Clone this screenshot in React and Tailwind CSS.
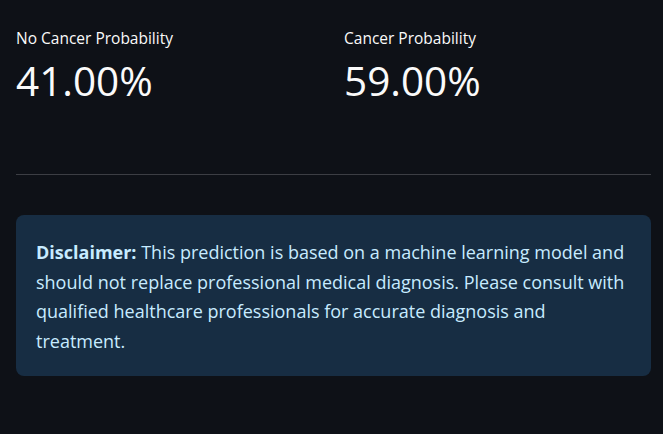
export default function App() {
  return (
    <div
      className="min-h-screen w-full bg-[#0e1117] text-[#fafafa] pl-4 pr-3"
      style={{ fontFamily: "'Open Sans', 'Noto Sans', sans-serif" }}
    >
      <div className="grid grid-cols-2 gap-[21px] pt-[26px]">
        <div>
          <div className="text-[15.5px] leading-[24px]">No Cancer Probability</div>
          <div className="text-[40.5px] leading-[54px] mt-[4px]">41.00%</div>
        </div>
        <div>
          <div className="text-[15.5px] leading-[24px]">Cancer Probability</div>
          <div className="text-[40.5px] leading-[54px] mt-[4px]">59.00%</div>
        </div>
      </div>

      <hr className="mt-[66px] border-0 border-t border-[#3c3e44]" />

      <div className="mt-10 rounded-lg bg-[#172d43] px-5 pt-[23px] pb-[19px] text-[#c7ebff] text-[18px] leading-[29.7px]">
        <b className="font-bold">Disclaimer:</b> This prediction is based on a
        machine learning model and should not replace professional medical
        diagnosis. Please consult with qualified healthcare professionals for
        accurate diagnosis and treatment.
      </div>
    </div>
  );
}
